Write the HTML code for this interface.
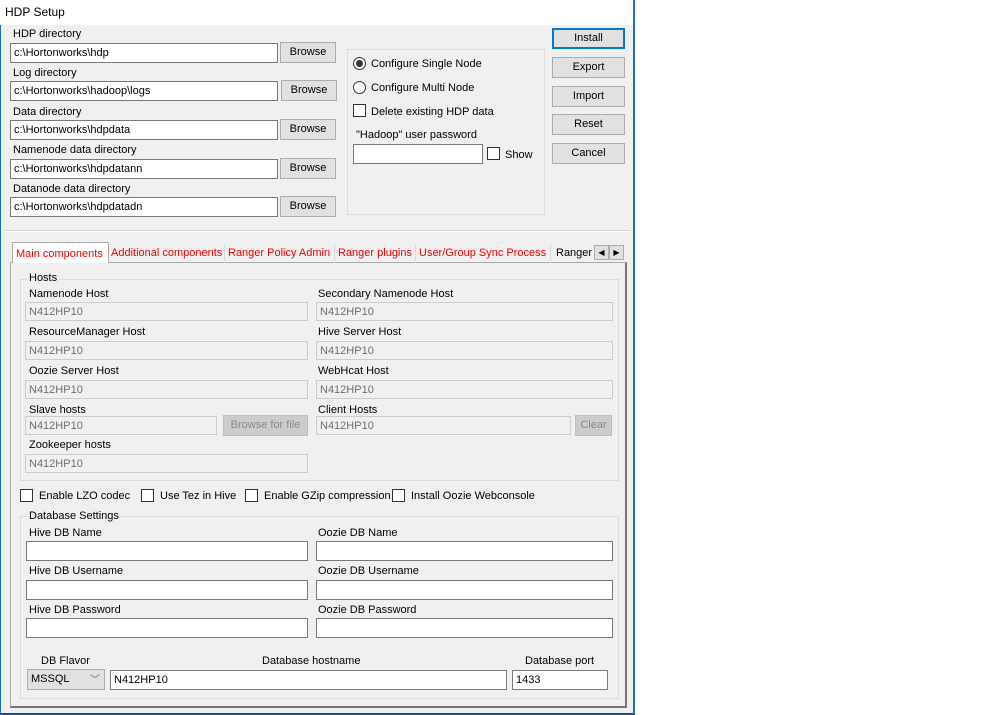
<!DOCTYPE html><html><head><style>
body{margin:0;width:999px;height:715px;background:#fff;position:relative;overflow:hidden;font-family:"Liberation Sans",sans-serif;font-size:11px;color:#000}
div,span{position:absolute;box-sizing:border-box}
.win{left:0;top:0;width:635px;height:715px;background:#f0f0f0;border-left:1px solid #1e6fc8;border-right:2px solid #1e6fc8;border-bottom:2px solid #1e4f80}
.title{left:0;top:0;width:633px;height:25px;background:#fff}
.tb{background:#fff;border:1px solid #7a7a7a;padding:2px 3px;line-height:14px;white-space:nowrap}
.dis{background:#f0f0f0;border:1px solid #ccc;color:#6d6d6d}
.btn{background:#e1e1e1;border:1px solid #adadad;text-align:center;line-height:19px}
.lbl{white-space:nowrap;line-height:14px}
.grp{border:1px solid #dcdcdc}
.cb{width:13px;height:13px;border:1px solid #333;background:#fff}
.tab{top:244px;height:19px;line-height:19px;color:#e00;white-space:nowrap;border-right:1px solid #d9d9d9;padding:0 3px}
</style></head><body>
<div class="win"></div>
<div class="title"></div>
<span class="lbl" style="left:5px;top:5px;font-size:12px">HDP Setup</span>

<span class="lbl" style="left:13px;top:27px">HDP directory</span>
<div class="tb" style="left:10px;top:43px;width:268px;height:20px">c:\Hortonworks\hdp</div>
<div class="btn" style="left:280px;top:42px;width:56px;height:21px">Browse</div>
<span class="lbl" style="left:13px;top:66px">Log directory</span>
<div class="tb" style="left:10px;top:81px;width:268px;height:20px">c:\Hortonworks\hadoop\logs</div>
<div class="btn" style="left:281px;top:80px;width:56px;height:21px">Browse</div>
<span class="lbl" style="left:13px;top:105px">Data directory</span>
<div class="tb" style="left:10px;top:120px;width:268px;height:20px">c:\Hortonworks\hdpdata</div>
<div class="btn" style="left:280px;top:119px;width:56px;height:21px">Browse</div>
<span class="lbl" style="left:13px;top:143px">Namenode data directory</span>
<div class="tb" style="left:10px;top:159px;width:268px;height:20px">c:\Hortonworks\hdpdatann</div>
<div class="btn" style="left:280px;top:158px;width:56px;height:21px">Browse</div>
<span class="lbl" style="left:13px;top:182px">Datanode data directory</span>
<div class="tb" style="left:10px;top:197px;width:268px;height:20px">c:\Hortonworks\hdpdatadn</div>
<div class="btn" style="left:280px;top:196px;width:56px;height:21px">Browse</div>

<div class="grp" style="left:347px;top:49px;width:198px;height:166px"></div>
<div style="left:353px;top:57px;width:13px;height:13px;border:1px solid #333;border-radius:50%;background:#fff"><div style="left:2px;top:2px;width:7px;height:7px;border-radius:50%;background:#333"></div></div>
<span class="lbl" style="left:371px;top:57px">Configure Single Node</span>
<div style="left:353px;top:81px;width:13px;height:13px;border:1px solid #333;border-radius:50%;background:#fff"></div>
<span class="lbl" style="left:371px;top:81px">Configure Multi Node</span>
<div class="cb" style="left:353px;top:104px"></div>
<span class="lbl" style="left:371px;top:105px">Delete existing HDP data</span>
<span class="lbl" style="left:356px;top:128px">"Hadoop" user password</span>
<div class="tb" style="left:353px;top:144px;width:130px;height:20px"></div>
<div class="cb" style="left:487px;top:147px"></div>
<span class="lbl" style="left:505px;top:148px">Show</span>

<div class="btn" style="left:552px;top:28px;width:73px;height:21px;border:2px solid #0078d7;line-height:17px">Install</div>
<div class="btn" style="left:552px;top:57px;width:73px;height:21px">Export</div>
<div class="btn" style="left:552px;top:86px;width:73px;height:21px">Import</div>
<div class="btn" style="left:552px;top:114px;width:73px;height:21px">Reset</div>
<div class="btn" style="left:552px;top:143px;width:73px;height:21px">Cancel</div>

<div style="left:3px;top:230px;width:627px;height:2px;border-top:1px solid #d6d6d6;border-bottom:1px solid #fff"></div>

<div style="left:10px;top:262px;width:617px;height:446px;border:1px solid #aaa;border-right:2px solid #777;border-bottom:2px solid #777;background:#f0f0f0"></div>
<span class="tab" style="left:12px;top:242px;height:21px;width:97px;background:#fff;border:1px solid #aaa;border-bottom:none;line-height:22px">Main components</span>
<span class="tab" style="left:108px;width:117px">Additional components</span>
<span class="tab" style="left:225px;width:110px">Ranger Policy Admin</span>
<span class="tab" style="left:335px;width:81px">Ranger plugins</span>
<span class="tab" style="left:416px;width:135px">User/Group Sync Process</span>
<span class="tab" style="left:553px;color:#000;border:none">Ranger</span>
<div class="btn" style="left:594px;top:245px;width:15px;height:15px;line-height:13px;font-size:8px">◀</div>
<div class="btn" style="left:609px;top:245px;width:15px;height:15px;line-height:13px;font-size:8px">▶</div>

<div class="grp" style="left:20px;top:279px;width:599px;height:202px"></div>
<span class="lbl" style="left:27px;top:271px;background:#f0f0f0;padding:0 2px">Hosts</span>
<span class="lbl" style="left:29px;top:287px">Namenode Host</span>
<div class="tb dis" style="left:25px;top:302px;width:283px;height:19px">N412HP10</div>
<span class="lbl" style="left:318px;top:287px">Secondary Namenode Host</span>
<div class="tb dis" style="left:316px;top:302px;width:297px;height:19px">N412HP10</div>
<span class="lbl" style="left:29px;top:325px">ResourceManager Host</span>
<div class="tb dis" style="left:25px;top:341px;width:283px;height:19px">N412HP10</div>
<span class="lbl" style="left:318px;top:325px">Hive Server Host</span>
<div class="tb dis" style="left:316px;top:341px;width:297px;height:19px">N412HP10</div>
<span class="lbl" style="left:29px;top:364px">Oozie Server Host</span>
<div class="tb dis" style="left:25px;top:380px;width:283px;height:19px">N412HP10</div>
<span class="lbl" style="left:318px;top:364px">WebHcat Host</span>
<div class="tb dis" style="left:316px;top:380px;width:297px;height:19px">N412HP10</div>
<span class="lbl" style="left:29px;top:403px">Slave hosts</span>
<div class="tb dis" style="left:25px;top:416px;width:192px;height:19px">N412HP10</div>
<div class="btn" style="left:223px;top:415px;width:85px;height:21px;background:#ccc;border-color:#bfbfbf;color:#8a8a8a">Browse for file</div>
<span class="lbl" style="left:318px;top:403px">Client Hosts</span>
<div class="tb dis" style="left:316px;top:416px;width:255px;height:19px">N412HP10</div>
<div class="btn" style="left:575px;top:415px;width:37px;height:21px;background:#ccc;border-color:#bfbfbf;color:#8a8a8a">Clear</div>
<span class="lbl" style="left:29px;top:438px">Zookeeper hosts</span>
<div class="tb dis" style="left:25px;top:454px;width:283px;height:19px">N412HP10</div>

<div class="cb" style="left:20px;top:489px"></div><span class="lbl" style="left:39px;top:489px">Enable LZO codec</span>
<div class="cb" style="left:141px;top:489px"></div><span class="lbl" style="left:160px;top:489px">Use Tez in Hive</span>
<div class="cb" style="left:245px;top:489px"></div><span class="lbl" style="left:264px;top:489px">Enable GZip compression</span>
<div class="cb" style="left:392px;top:489px"></div><span class="lbl" style="left:411px;top:489px">Install Oozie Webconsole</span>

<div class="grp" style="left:20px;top:516px;width:599px;height:183px"></div>
<span class="lbl" style="left:27px;top:509px;background:#f0f0f0;padding:0 2px">Database Settings</span>
<span class="lbl" style="left:29px;top:526px">Hive DB Name</span>
<div class="tb" style="left:26px;top:541px;width:282px;height:20px"></div>
<span class="lbl" style="left:318px;top:526px">Oozie DB Name</span>
<div class="tb" style="left:316px;top:541px;width:297px;height:20px"></div>
<span class="lbl" style="left:29px;top:564px">Hive DB Username</span>
<div class="tb" style="left:26px;top:580px;width:282px;height:20px"></div>
<span class="lbl" style="left:318px;top:564px">Oozie DB Username</span>
<div class="tb" style="left:316px;top:580px;width:297px;height:20px"></div>
<span class="lbl" style="left:29px;top:603px">Hive DB Password</span>
<div class="tb" style="left:26px;top:618px;width:282px;height:20px"></div>
<span class="lbl" style="left:318px;top:603px">Oozie DB Password</span>
<div class="tb" style="left:316px;top:618px;width:297px;height:20px"></div>

<span class="lbl" style="left:41px;top:654px">DB Flavor</span>
<div class="tb" style="left:27px;top:669px;width:78px;height:21px;background:#e1e1e1;border-color:#adadad;line-height:15px">MSSQL<span style="left:62px;top:3px;color:#666;font-size:10px">﹀</span></div>
<span class="lbl" style="left:262px;top:654px">Database hostname</span>
<div class="tb" style="left:110px;top:670px;width:397px;height:20px">N412HP10</div>
<span class="lbl" style="left:525px;top:654px">Database port</span>
<div class="tb" style="left:512px;top:670px;width:96px;height:20px">1433</div>
</body></html>
